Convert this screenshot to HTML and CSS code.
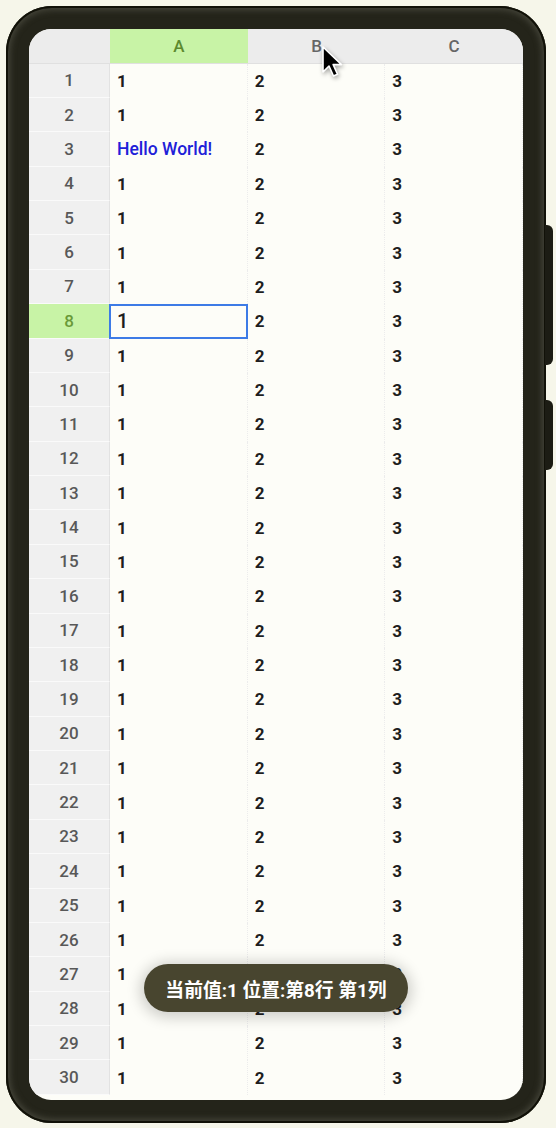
FILE: index.html
```html
<!DOCTYPE html>
<html lang="zh">
<head>
<meta charset="utf-8">
<title>Sheet</title>
<link rel="stylesheet" href="styles.css">
</head>
<body>
<div class="phone">
  <div class="btn btn-vol"></div>
  <div class="btn btn-power"></div>
  <div class="screen">
    <div class="sheet" id="sheet">
      <div class="corner"></div>
      <div class="colhead sel">A</div>
      <div class="colhead">B</div>
      <div class="colhead">C</div>
    </div>
    <div class="toast">当前值:1 位置:第8行 第1列</div>
    <svg class="cursor" width="24" height="36" viewBox="0 0 24 36">
      <path d="M2 2 L2 27 L8 21 L12.5 31 L16.5 29.3 L12.2 19.6 L20.5 19.6 Z" fill="#000" stroke="#fff" stroke-width="1.6" stroke-linejoin="round"/>
    </svg>
  </div>
</div>
<script>
  var s = document.getElementById('sheet');
  var html = '';
  for (var r = 1; r <= 30; r++) {
    var sel = r === 8;
    html += '<div class="rowhead' + (sel ? ' sel' : '') + '">' + r + '</div>';
    html += '<div class="cell' + (sel ? ' active' : '') + (r === 3 ? ' blue' : '') + '">' + (r === 3 ? 'Hello World!' : '1') + '</div>';
    html += '<div class="cell">2</div>';
    html += '<div class="cell">3</div>';
  }
  s.insertAdjacentHTML('beforeend', html);
</script>
</body>
</html>
```

FILE: styles.css
```css
html, body {
  margin: 0;
  padding: 0;
}
body {
  background: #f6f6ea;
  width: 556px;
  height: 1128px;
  overflow: hidden;
  font-family: Roboto, "Noto Sans CJK SC", sans-serif;
}
.phone {
  position: relative;
  margin: 6px 0 0 6px;
  width: 494px;
  height: 1071px;
  padding: 23px;
  border-radius: 46px;
  background: #24241a;
  box-shadow: inset 0 0 0 2px #111108, inset 0 0 6px 4px #45453a;
}
.btn {
  position: absolute;
  right: -7px;
  width: 8px;
  background: #1c1c14;
  border-radius: 0 6px 6px 0;
}
.btn-vol {
  top: 219px;
  height: 140px;
}
.btn-power {
  top: 394px;
  height: 70px;
}
.screen {
  position: relative;
  height: 100%;
  border-radius: 22px;
  overflow: hidden;
  background: #fdfdf8;
}
.sheet {
  display: grid;
  grid-template-columns: 81px repeat(3, 1fr);
  grid-auto-rows: 34.38px;
  grid-template-rows: 34.5px;
}
.corner, .colhead {
  background: #ececec;
  border-bottom: 1px solid #e0e0e0;
}
.colhead {
  display: flex;
  align-items: center;
  justify-content: center;
  color: #666;
  font-size: 17px;
  font-weight: 500;
}
.colhead.sel {
  background: #c8f3a6;
  color: #5d8a2e;
}
.rowhead {
  display: flex;
  align-items: center;
  justify-content: center;
  background: #f0f0f0;
  color: #585858;
  font-size: 17px;
  font-weight: 500;
  border-right: 1px solid #e2e2e2;
  border-bottom: 1px solid #fafafa;
}
.rowhead.sel {
  background: #c8f3a6;
  color: #6a9a38;
}
.cell {
  display: flex;
  align-items: center;
  padding-left: 7px;
  color: #1e1e1e;
  font-size: 17px;
  font-weight: 700;
  border-right: 1px dotted #ececec;
}
.cell.blue {
  color: #2020d8;
  font-size: 17.5px;
  font-weight: 500;
}
.cell.active {
  outline: 2px solid #3d7be6;
  outline-offset: -2px;
  margin-left: -1px;
  padding-left: 8px;
  font-size: 20px;
  font-weight: 500;
}
.toast {
  position: absolute;
  z-index: 2;
  left: 115px;
  top: 935px;
  width: 264px;
  height: 48px;
  border-radius: 24px;
  background: #48452f;
  color: #ffffff;
  font-family: Roboto, "Noto Sans CJK SC", sans-serif;
  font-weight: 700;
  font-size: 18.8px;
  display: flex;
  align-items: center;
  justify-content: center;
  box-shadow: 0 2px 14px 4px rgba(0, 0, 0, 0.18);
}
.cursor {
  position: absolute;
  z-index: 3;
  left: 292px;
  top: 16px;
  filter: drop-shadow(1px 2px 2px rgba(0,0,0,0.35));
}
```
